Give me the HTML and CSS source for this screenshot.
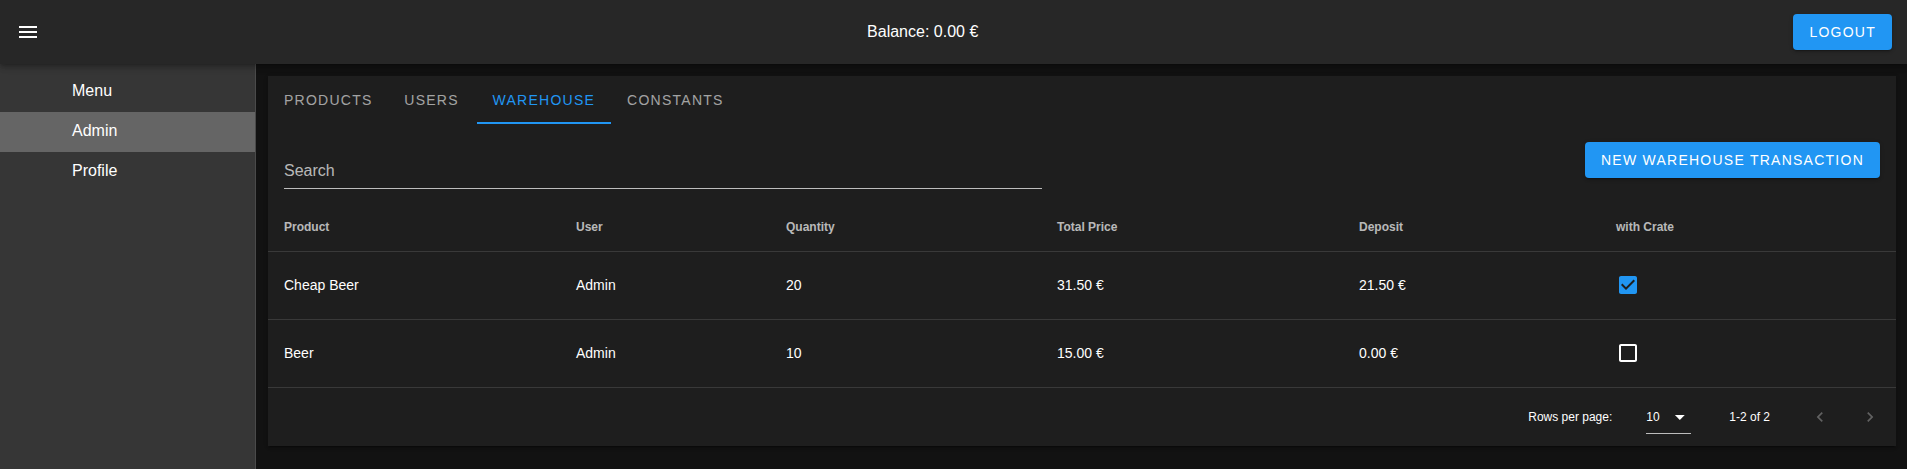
FILE: index.html
```html
<!DOCTYPE html>
<html lang="en">
<head>
<meta charset="utf-8">
<title>Admin - Warehouse</title>
<link rel="stylesheet" href="styles.css">
</head>
<body>
<div class="app">
  <header class="appbar">
    <button class="nav-icon" aria-label="menu">
      <svg viewBox="0 0 24 24" width="24" height="24"><path fill="#fff" d="M3 18h18v-2H3v2zm0-5h18v-2H3v2zm0-7v2h18V6H3z"/></svg>
    </button>
    <div class="balance">Balance: 0.00 €</div>
    <button class="btn">Logout</button>
  </header>
  <div class="body">
    <nav class="drawer">
      <div class="nav-item">Menu</div>
      <div class="nav-item active">Admin</div>
      <div class="nav-item">Profile</div>
    </nav>
    <main class="main">
      <section class="card">
        <div class="tabs">
          <div class="tab">Products</div>
          <div class="tab">Users</div>
          <div class="tab active">Warehouse</div>
          <div class="tab">Constants</div>
        </div>
        <div class="toolbar">
          <div class="search">Search</div>
          <button class="btn">New Warehouse Transaction</button>
        </div>
        <table class="table">
          <colgroup>
            <col class="c1"><col class="c2"><col class="c3"><col class="c4"><col class="c5"><col class="c6">
          </colgroup>
          <thead>
            <tr><th>Product</th><th>User</th><th>Quantity</th><th>Total Price</th><th>Deposit</th><th>with Crate</th></tr>
          </thead>
          <tbody>
            <tr>
              <td>Cheap Beer</td><td>Admin</td><td>20</td><td>31.50 €</td><td>21.50 €</td>
              <td><svg class="cb" viewBox="0 0 24 24" width="24" height="24"><path fill="#2196F3" d="M19 3H5c-1.11 0-2 .9-2 2v14c0 1.1.89 2 2 2h14c1.11 0 2-.9 2-2V5c0-1.1-.89-2-2-2zm-9 14l-5-5 1.41-1.41L10 14.17l7.59-7.59L19 8l-9 9z"/></svg></td>
            </tr>
            <tr>
              <td>Beer</td><td>Admin</td><td>10</td><td>15.00 €</td><td>0.00 €</td>
              <td><svg class="cb" viewBox="0 0 24 24" width="24" height="24"><path fill="#fff" d="M19 5v14H5V5h14m0-2H5c-1.1 0-2 .9-2 2v14c0 1.1.9 2 2 2h14c1.1 0 2-.9 2-2V5c0-1.1-.9-2-2-2z"/></svg></td>
            </tr>
          </tbody>
        </table>
        <div class="footer">
          <span class="rpp">Rows per page:</span>
          <div class="select">
            <span>10</span>
            <svg viewBox="0 0 24 24" width="24" height="24"><path fill="#fff" d="M7 10l5 5 5-5z"/></svg>
          </div>
          <span class="range">1-2 of 2</span>
          <svg class="chev" viewBox="0 0 24 24" width="20" height="20"><path d="M15.41 7.41L14 6l-6 6 6 6 1.41-1.41L10.83 12z"/></svg>
          <svg class="chev next" viewBox="0 0 24 24" width="20" height="20"><path d="M10 6L8.59 7.41 13.17 12l-4.58 4.59L10 18l6-6z"/></svg>
        </div>
      </section>
    </main>
  </div>
</div>
</body>
</html>
```
FILE: styles.css
```css
* { box-sizing: border-box; }
html, body { margin: 0; padding: 0; height: 100%; }
body {
  background: #121212;
  color: #fff;
  font-family: "Liberation Sans", Arial, sans-serif;
  overflow: hidden;
}
.app { display: flex; flex-direction: column; height: 100%; }

.appbar {
  position: relative;
  z-index: 2;
  height: 64px;
  flex: 0 0 64px;
  background: #272727;
  display: flex;
  align-items: center;
  padding: 0 15px 0 4px;
  box-shadow: 0 2px 4px -1px rgba(0,0,0,.2), 0 4px 5px 0 rgba(0,0,0,.14), 0 1px 10px 0 rgba(0,0,0,.12);
}
.nav-icon {
  width: 48px; height: 48px;
  background: none; border: 0; padding: 12px; margin: 0;
  display: flex; align-items: center; justify-content: center;
}
.balance { flex: 1; text-align: center; font-size: 16px; color: #fff; }

.btn {
  height: 36px;
  padding: 0 16px;
  background: #2196F3;
  color: #fff;
  border: 0;
  border-radius: 4px;
  font-family: "Liberation Sans", Arial, sans-serif;
  font-size: 14px;
  letter-spacing: 1.25px;
  text-transform: uppercase;
  box-shadow: 0 3px 1px -2px rgba(0,0,0,.2), 0 2px 2px 0 rgba(0,0,0,.14), 0 1px 5px 0 rgba(0,0,0,.12);
}

.body { flex: 1; display: flex; min-height: 0; }
.drawer {
  width: 256px;
  flex: 0 0 256px;
  background: #363636;
  border-right: 1px solid #4a4a4a;
  padding-top: 8px;
}
.nav-item {
  height: 40px;
  display: flex; align-items: center;
  padding: 0 0 2px 72px;
  font-size: 16px;
  color: #fff;
}
.nav-item.active { background: #656565; }

.main { flex: 1; padding: 12px 11px 0 12px; }
.card {
  background: #1e1e1e;
  box-shadow: 0 3px 1px -2px rgba(0,0,0,.2), 0 2px 2px 0 rgba(0,0,0,.14), 0 1px 5px 0 rgba(0,0,0,.12);
}

.tabs { display: flex; height: 48px; }
.tab {
  min-width: 90px;
  padding: 0 16px;
  display: flex; align-items: center; justify-content: center;
  font-size: 14px;
  letter-spacing: 1.25px;
  text-transform: uppercase;
  color: rgba(255,255,255,.6);
}
.tab:first-child { padding-right: 14px; }
.tab.active { color: #2196F3; box-shadow: inset 0 -2px 0 #2196F3; }

.toolbar {
  height: 79px;
  display: flex;
  justify-content: space-between;
  align-items: flex-start;
  padding: 0 16px;
}
.search {
  width: 758px;
  padding: 37px 0 7px 0;
  line-height: 20px;
  font-size: 16px;
  color: rgba(255,255,255,.7);
  border-bottom: 1px solid #bdbdbd;
}
.toolbar .btn { margin-top: 18px; }

.table { width: 100%; border-collapse: collapse; table-layout: fixed; }
.c1 { width: 292px; } .c2 { width: 210px; } .c3 { width: 271px; }
.c4 { width: 302px; } .c5 { width: 257px; } .c6 { width: 296px; }
.table th {
  height: 48px;
  padding: 0 16px;
  text-align: left;
  font-size: 12px;
  font-weight: bold;
  color: rgba(255,255,255,.7);
  border-bottom: 1px solid rgba(255,255,255,.12);
  vertical-align: middle;
}
.table td {
  height: 68px;
  padding: 0 16px;
  font-size: 14px;
  color: #fff;
  border-bottom: 1px solid rgba(255,255,255,.12);
  vertical-align: middle;
}
.cb { display: block; }

.footer {
  height: 58px;
  display: flex;
  align-items: center;
  justify-content: flex-end;
  padding-right: 16px;
  font-size: 12px;
  color: #fff;
}
.select {
  margin-left: 34px;
  width: 45px;
  height: 35px;
  display: flex; align-items: center;
  border-bottom: 1px solid #bcbcbc;
  padding-top: 1px;
}
.select svg { margin-left: 8px; }
.range { margin-left: 38px; }
.chev { fill: rgba(255,255,255,.3); margin-left: 40px; }
.chev.next { margin-left: 30px; }
```
